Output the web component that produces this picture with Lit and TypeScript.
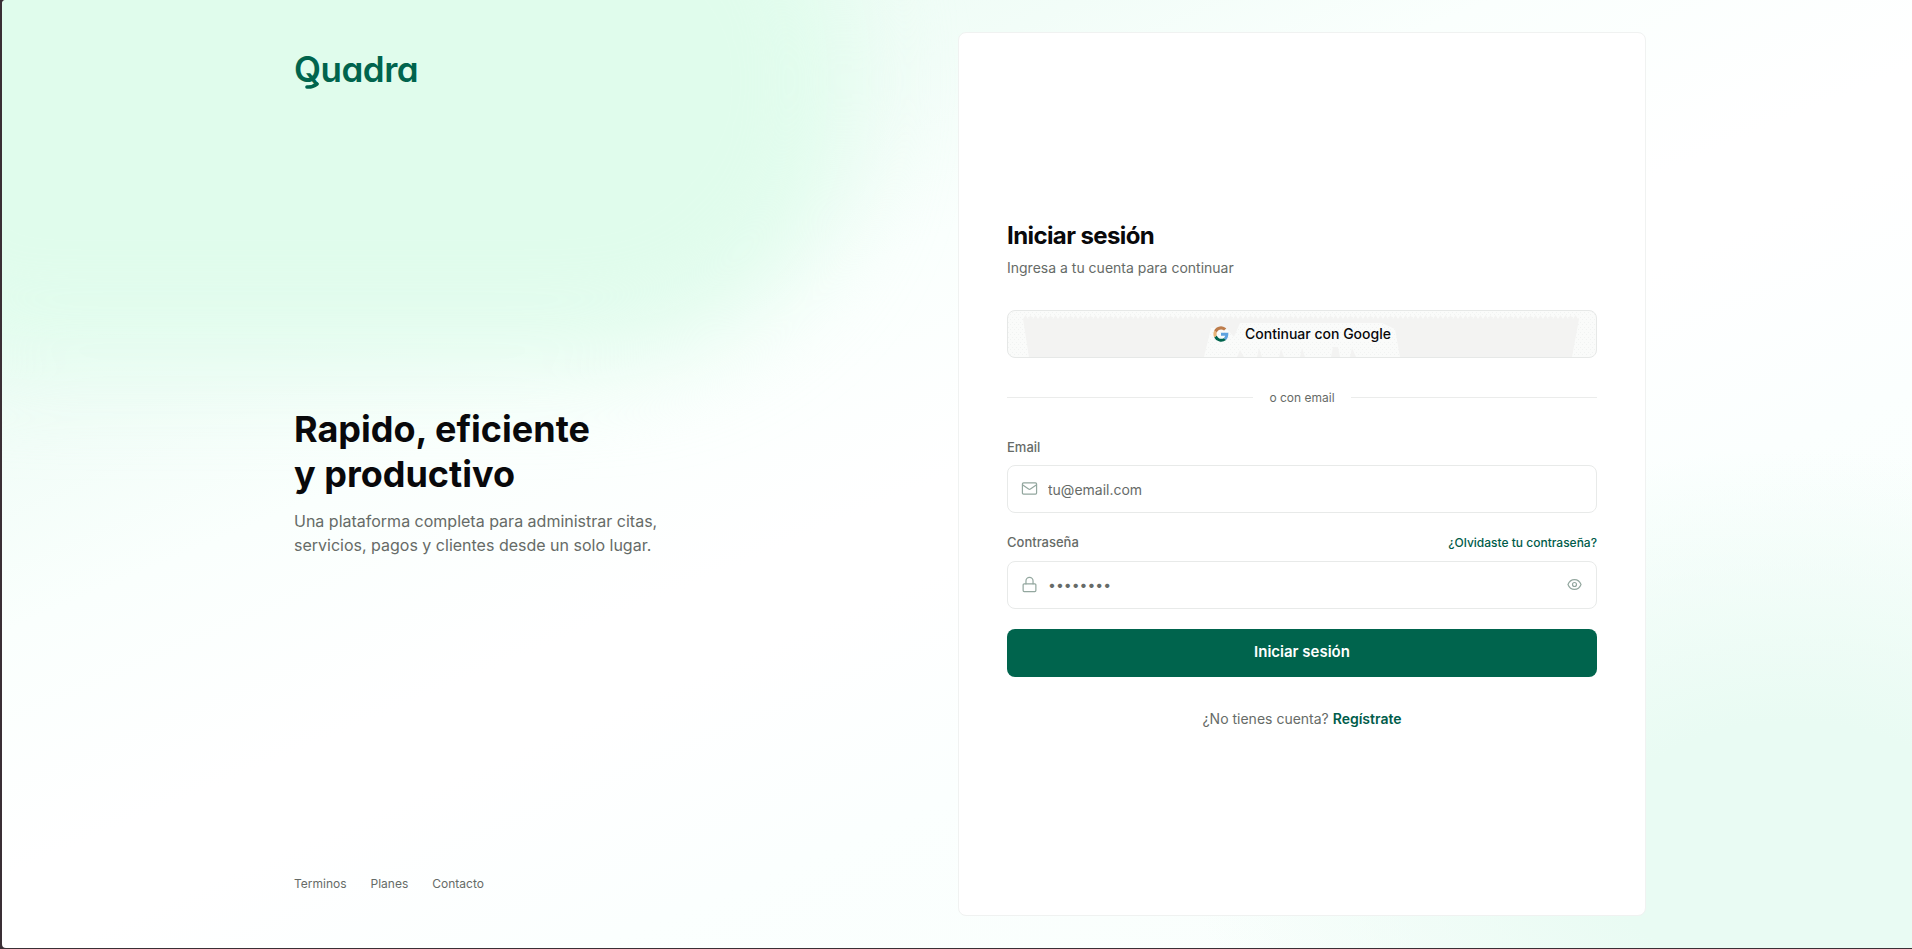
import { LitElement, html, css, svg } from "lit";
import { customElement, property } from "lit/decorators.js";

const icons = {
  mail: svg`<rect x="2" y="4" width="20" height="16" rx="1.5" /><path d="m2.5 7 8.2 5.6a2.2 2.2 0 0 0 2.6 0L21.5 7" />`,
  lock: svg`<rect x="3" y="11" width="18" height="11" rx="1.5" /><path d="M7 11V7a5 5 0 0 1 10 0v4" />`,
  eye: svg`<path d="M2.8 12s2.7-7 9.2-7 9.2 7 9.2 7-2.7 7-9.2 7-9.2-7-9.2-7Z" /><circle cx="12" cy="12" r="2.8" />`,
};

@customElement("app-icon")
export class AppIcon extends LitElement {
  static styles = css`
    :host {
      display: block;
      width: 17px;
      height: 17px;
      margin-bottom: 1px;
      color: #93a79f;
    }

    .icon {
      display: block;
      width: 100%;
      height: 100%;
      fill: none;
      stroke: currentColor;
      stroke-width: 1.7;
      stroke-linecap: round;
      stroke-linejoin: round;
    }
  `;

  @property({ type: String })
  name: keyof typeof icons = "mail";

  render() {
    return html`<svg class="icon" viewBox="0 0 24 24">${icons[this.name]}</svg>`;
  }
}

@customElement("login-form")
export class LoginForm extends LitElement {
  static styles = css`
    :host {
      display: block;
    }

    .title {
      margin: 0;
      font-size: 24px;
      line-height: 36px;
      font-weight: 700;
      letter-spacing: -0.6px;
      color: #09090b;
    }

    .subtitle {
      margin: 4px 0 32px;
      font-size: 14px;
      line-height: 20px;
      color: #666b67;
    }

    .google {
      display: grid;
      width: 100%;
      height: 48px;
      box-sizing: border-box;
      padding: 0;
      border: 1px solid #e6e8e7;
      border-radius: 8px;
      background: #fafbfa;
      font: 500 14px/20px Inter, sans-serif;
      color: #09090b;
      overflow: hidden;
    }

    .google > * {
      grid-area: 1 / 1;
    }

    .texture {
      display: block;
      width: 588px;
      height: 46px;
    }

    .google-label {
      display: flex;
      align-items: center;
      justify-content: center;
      gap: 16px;
      height: 46px;
    }

    .google-mark {
      width: 16px;
      height: 16px;
    }

    .divider {
      display: flex;
      align-items: center;
      gap: 16px;
      margin: 32px 0;
      font-size: 12px;
      line-height: 16px;
      color: #666b67;
    }

    .divider::before,
    .divider::after {
      content: "";
      flex: 1;
      height: 1px;
      margin-bottom: 1px;
      background: #ebeceb;
    }

    .field {
      margin-bottom: 20px;
    }

    .field-head {
      display: flex;
      align-items: center;
      justify-content: space-between;
      height: 17px;
      margin-bottom: 10px;
    }

    .field + .field .field-head {
      height: 18px;
    }

    .label {
      font-size: 13px;
      font-weight: 500;
      color: #666b67;
    }

    .link {
      font-size: 12px;
      font-weight: 500;
      color: #005c4a;
      text-decoration: none;
    }

    .control {
      display: flex;
      align-items: center;
      gap: 10px;
      height: 48px;
      box-sizing: border-box;
      padding: 0 13px;
      border: 1px solid #e8eae9;
      border-radius: 8px;
      background: #fff;
    }

    .input {
      flex: 1;
      min-width: 0;
      padding: 2px 0 0;
      border: 0;
      outline: 0;
      background: none;
      font: 400 14px/20px Inter, sans-serif;
    }

    .input[type="password"] {
      padding-top: 0;
    }

    .input::placeholder {
      color: #666b68;
      opacity: 1;
    }

    .submit {
      display: block;
      width: 100%;
      height: 48px;
      padding: 0 0 2px;
      border: 0;
      border-radius: 8px;
      background: #00644d;
      font: 600 15px/20px Inter, sans-serif;
      color: #fff;
    }

    .signup {
      margin: 32px 0 0;
      font-size: 14px;
      line-height: 20px;
      text-align: center;
      color: #666b67;
    }

    .signup .link {
      font-size: 14px;
      font-weight: 600;
    }
  `;

  render() {
    return html`
      <h2 class="title">Iniciar sesión</h2>
      <p class="subtitle">Ingresa a tu cuenta para continuar</p>
      <button class="google">
        <svg class="texture" viewBox="0 0 588 46">
          <defs>
            <pattern id="teeth" width="5" height="4" patternUnits="userSpaceOnUse">
              <path d="M0 4 2.5 0 5 4Z" fill="#f3f3f2" />
            </pattern>
            <pattern id="grain" width="4" height="5" patternUnits="userSpaceOnUse">
              <path d="M0 1.5h1M2 3.5h1" stroke="#f1f3f2" />
            </pattern>
          </defs>
          <rect width="588" height="46" fill="url(#grain)" />
          <rect x="15" y="4" width="556" height="4" fill="url(#teeth)" />
          <path
            d="M15 8H571L564 46H392L387 18 374 12H232L226 26 218 17H203L196 46H21Z"
            fill="#f3f3f2"
          />
          <path
            d="M229 46l3-7 4 7ZM249 46l2-9 3 9ZM271 46l2-8 3 8ZM292 46l2-9 3 9ZM323 46l2-10h5l2 10ZM342 46l2-9 4 9Z"
            fill="#f3f3f2"
          />
        </svg>
        <span class="google-label">
          <svg class="google-mark" viewBox="0 0 24 24">
            <path fill="#5fa3df" d="M23 10H12v4.6h6.3a5.5 5.5 0 0 1-2.4 3.6l3.6 2.9C21.7 19 23.3 15 23 10Z" />
            <path fill="#00644d" d="M1.8 17.1A11.5 11.5 0 0 0 19.6 21l-3.7-2.8c-3.5 2.2-8.6.8-10.2-4Z" />
            <path fill="#e8b477" d="M1.8 6.9a11.6 11.6 0 0 0 0 10.2l3.9-2.9a7 7 0 0 1 0-4.4Z" />
            <path fill="#bd7c4b" d="M1.8 6.9A11.5 11.5 0 0 1 20 3.6l-3.4 3.3C13 3.7 7.3 5.2 5.7 9.8Z" />
          </svg>
          Continuar con Google
        </span>
      </button>
      <div class="divider">o con email</div>
      <div class="field">
        <div class="field-head"><label class="label">Email</label></div>
        <div class="control">
          <app-icon name="mail"></app-icon>
          <input class="input" type="email" placeholder="tu@email.com" />
        </div>
      </div>
      <div class="field">
        <div class="field-head">
          <label class="label">Contraseña</label>
          <a class="link">¿Olvidaste tu contraseña?</a>
        </div>
        <div class="control">
          <app-icon name="lock"></app-icon>
          <input class="input" type="password" placeholder="••••••••" />
          <app-icon name="eye"></app-icon>
        </div>
      </div>
      <button class="submit">Iniciar sesión</button>
      <p class="signup">¿No tienes cuenta? <a class="link">Regístrate</a></p>
    `;
  }
}

@customElement("app-root")
export class AppRoot extends LitElement {
  static styles = css`
    :host {
      display: block;
      height: 949px;
      box-sizing: border-box;
      padding: 0 0 1px 2px;
      background: #3a2f35;
      font-family: Inter, sans-serif;
    }

    .page {
      position: relative;
      isolation: isolate;
      display: grid;
      grid-template-columns: 688px 688px;
      height: 948px;
      box-sizing: border-box;
      padding: 32px 0 32px 268px;
      border-radius: 4px 0 0 4px;
      overflow: hidden;
      background:
        radial-gradient(ellipse 600px 400px at 1790px 850px, #e9fbf3 0%, #e9fbf3 32%, #e9fbf300 100%),
        linear-gradient(157deg, #e4fcf0 0%, #f2fdf8 26%, #fafffd 36%, #fff 50%, #fff 55%, #fbfffe 68%, #f8fefb 100%);
    }

    /* soft mint glow behind the left column */
    .page::before {
      content: "";
      position: absolute;
      z-index: -1;
      left: -120px;
      top: -180px;
      width: 970px;
      height: 540px;
      border-radius: 120px 240px 260px 120px;
      background: #e0fcec;
      filter: blur(50px);
    }

    .intro {
      display: flex;
      flex-direction: column;
      justify-content: space-between;
      padding: 16px 24px 20px;
    }

    .logo {
      position: relative;
      height: 44px;
      font-size: 35px;
      line-height: 42px;
      font-weight: 600;
      letter-spacing: -0.5px;
      font-feature-settings: "cv11";
      color: #00644d;
    }

    .swash {
      position: absolute;
      left: 10px;
      top: 33px;
      width: 16px;
      height: 8px;
      fill: none;
      stroke: currentColor;
      stroke-width: 3.6;
      stroke-linecap: round;
    }

    .headline {
      margin: 0 0 12px;
      font-size: 36px;
      line-height: 45px;
      font-weight: 700;
      color: #09090b;
    }

    .lead {
      margin: 0;
      font-size: 16px;
      line-height: 24px;
      color: #666b67;
    }

    .links {
      display: flex;
      gap: 24px;
      font-size: 12px;
      line-height: 24px;
      color: #666b67;
    }

    .card {
      display: flex;
      flex-direction: column;
      justify-content: center;
      padding: 0 48px 1px;
      border: 1px solid #f0f2f1;
      border-radius: 8px;
      background: #fff;
    }
  `;

  render() {
    return html`
      <main class="page">
        <section class="intro">
          <div class="logo">
            Quadra
            <svg class="swash" viewBox="0 0 16 8"><path d="M3 6c4 .3 7-.7 10-3" /></svg>
          </div>
          <div>
            <h1 class="headline">Rapido, eficiente<br />y productivo</h1>
            <p class="lead">
              Una plataforma completa para administrar citas,<br />servicios, pagos y clientes desde un solo lugar.
            </p>
          </div>
          <nav class="links">
            <a>Terminos</a>
            <a>Planes</a>
            <a>Contacto</a>
          </nav>
        </section>
        <section class="card">
          <login-form></login-form>
        </section>
      </main>
    `;
  }
}

declare global {
  interface HTMLElementTagNameMap {
    "app-icon": AppIcon;
    "login-form": LoginForm;
    "app-root": AppRoot;
  }
}
